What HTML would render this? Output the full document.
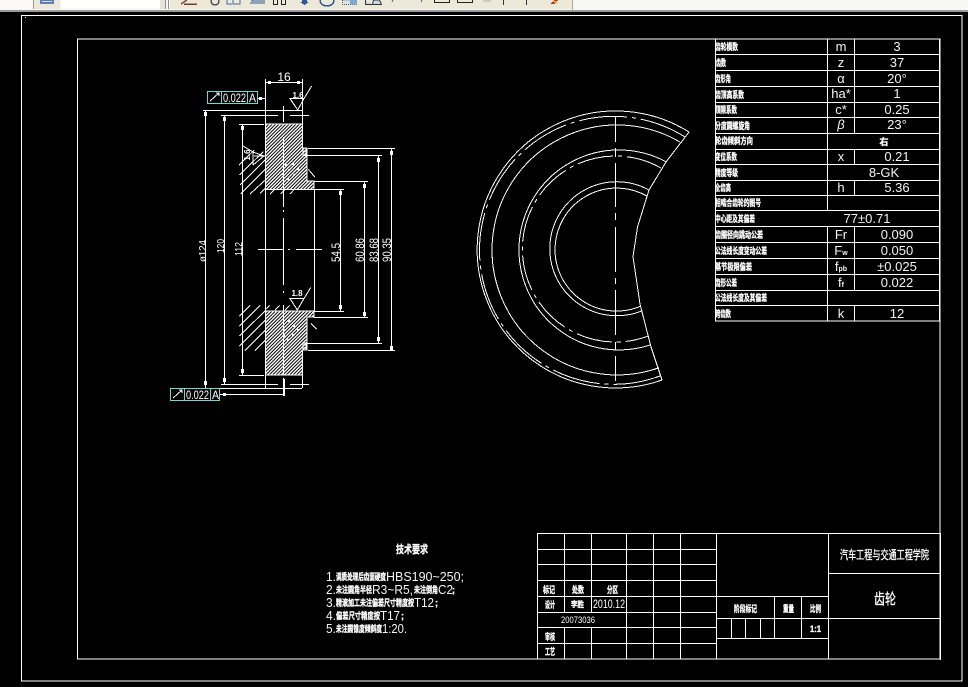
<!DOCTYPE html>
<html><head><meta charset="utf-8"><title>齿轮</title>
<style>
html,body{margin:0;padding:0;background:#000;width:968px;height:687px;overflow:hidden}
svg{display:block;position:absolute;left:0;top:0}
path,line,rect,circle,polyline{shape-rendering:crispEdges}
pattern rect{shape-rendering:auto}
.c{font-family:"Liberation Sans","WenQuanYi Zen Hei","Noto Sans CJK SC",sans-serif;font-weight:bold;font-size:9px;fill:#fff;stroke:#fff;stroke-width:.35}
.t{font-family:"Liberation Sans","Noto Sans CJK SC",sans-serif;font-size:12px;fill:#fff;stroke:#fff;stroke-width:.3}
.l{font-family:"Liberation Sans",sans-serif;font-size:13px;fill:#f4f4f4}
.d{font-family:"Liberation Sans",sans-serif;font-size:12px;fill:#fff}
.m{text-anchor:middle}
</style></head><body>
<svg width="968" height="687" viewBox="0 0 968 687" xmlns="http://www.w3.org/2000/svg">
<defs>
<pattern id="h" width="2.4" height="2.4" patternUnits="userSpaceOnUse" patternTransform="rotate(-45)">
<rect width="2.4" height="2.4" fill="#000"/><rect width="2.4" height="1.4" fill="#fff"/>
</pattern>
</defs>
<rect width="968" height="687" fill="#000"/>
<!-- toolbar -->
<rect x="0" y="0" width="968" height="10" fill="#f7f7f3"/>
<rect x="0" y="10" width="968" height="2" fill="#9a9a9a"/>
<rect x="0" y="0" width="31" height="9" fill="#fbfaf6"/>
<rect x="33" y="0" width="1" height="9" fill="#9b9b90"/>
<rect x="34" y="0" width="26" height="9" fill="#ece9d8"/>
<rect x="40" y="0" width="14" height="4" fill="#5f7fb8"/>
<rect x="42" y="1" width="10" height="1" fill="#cfd8ea"/>
<rect x="61" y="0" width="99" height="8" fill="#fff"/>
<rect x="160" y="0" width="5" height="9" fill="#e6e4d8"/>
<rect x="165" y="0" width="1" height="9" fill="#8f8f88"/>
<rect x="168" y="0" width="1" height="9" fill="#8f8f88"/>
<rect x="170" y="0" width="402" height="9" fill="#ece9d8"/>
<rect x="572" y="0" width="1" height="10" fill="#a8a8a0"/>
<path d="M181 4l6-4M184 4h13" stroke="#7a3a2a" stroke-width="1.5" fill="none"/>
<circle cx="215" cy="1" r="4" fill="none" stroke="#555" stroke-width="1.5"/>
<path d="M227 0v4h5M233 0v4h7V0" stroke="#3a6ea8" stroke-width="1" fill="none"/>
<path d="M250 3h15M252 0v1h13" stroke="#2a5a98" stroke-width="1.2" fill="none"/>
<path d="M273.500 0v4.500h4V0M281.500 0v4.500h4V0" stroke="#222" fill="none"/>
<path d="M302 0h5v2h2l-4.500 3l-4.500-3h2z" fill="#2a5a98"/>
<path d="M320 0a7 6 0 0 0 14 0" stroke="#2a5a98" stroke-width="1.500" fill="none"/>
<rect x="342.500" y="0" width="14" height="4.500" fill="#d8e4f0" stroke="#555" stroke-dasharray="1 1"/>
<path d="M350 0h7v4.500h-7z" fill="#7fa8d0"/>
<path d="M365.500 0v4.500h16l-2-4.500h-6l-1 4.500" stroke="#333" fill="#c8d8e8"/>
<path d="M392 2l1-2M421 2l1-2" stroke="#2a5a98" fill="none"/>
<path d="M434.500 0v2.500h15V0M457.500 0v2.500h15V0" stroke="#222" fill="none"/>
<path d="M483 1h8" stroke="#aaa"/>
<path d="M503.500 0v5M526.500 0v5" stroke="#333"/>
<path d="M550 4l5-4h3l-3 4z" fill="#c03020"/><path d="M554 1h3v2h-3z" fill="#d8b030"/>

<!-- frames -->
<g fill="none" stroke="#fff">
<rect x="21.500" y="15.500" width="940.500" height="665.500"/>
<rect x="77.500" y="39" width="862.500" height="620"/>
</g>
<rect x="25" y="17" width="1" height="1" fill="#fff"/>

<!-- section view hatch -->
<path d="M265.500 124H302.500V148H307V181H314V189.500H265.500Z" fill="url(#h)" style="shape-rendering:auto"/>
<path d="M265.500 311H314V317H307V350H302.500V375H265.500Z" fill="url(#h)" style="shape-rendering:auto"/>
<g fill="#fff">
<circle cx="286" cy="165" r="1"/><circle cx="289" cy="170" r="1"/><circle cx="293" cy="164" r="1"/><circle cx="298" cy="169" r="1"/><circle cx="294" cy="175" r="1"/><circle cx="288" cy="179" r="1"/><circle cx="283" cy="174" r="1"/>
<circle cx="289" cy="321" r="1"/><circle cx="294" cy="326" r="1"/><circle cx="298" cy="330" r="1"/><circle cx="293" cy="335" r="1"/><circle cx="288" cy="340" r="1"/><circle cx="284" cy="336" r="1"/><circle cx="285" cy="330" r="1"/>
</g>
<g stroke="#fff" stroke-width="1" fill="none">
<path d="M265.500 124H302.500V148H307V181H314V189.500H265.500Z"/>
<path d="M265.500 311H314V317H307V350H302.500V375H265.500Z"/>
<path d="M303 148h3v7.500h-3zM303 343h3v7h-3z"/>
<!-- extension lines top -->
<line x1="265.500" y1="79" x2="265.500" y2="388"/>
<line x1="302.500" y1="79" x2="302.500" y2="124"/>
<line x1="302.500" y1="375" x2="302.500" y2="388"/>
<line x1="314.500" y1="189" x2="314.500" y2="311"/>
<line x1="266" y1="82.500" x2="302" y2="82.500"/>
<line x1="203" y1="110.500" x2="302" y2="110.500"/>
<line x1="221" y1="115.500" x2="278" y2="115.500"/>
<line x1="290" y1="115.500" x2="309" y2="115.500"/>
<line x1="239" y1="124.500" x2="264" y2="124.500"/>
<line x1="308" y1="148.500" x2="395" y2="148.500"/>
<line x1="306" y1="155.500" x2="382" y2="155.500"/>
<line x1="314" y1="181.500" x2="368" y2="181.500"/>
<line x1="314" y1="189.500" x2="344" y2="189.500"/>
<line x1="314" y1="311.500" x2="344" y2="311.500"/>
<line x1="314" y1="317.500" x2="368" y2="317.500"/>
<line x1="306" y1="343.500" x2="382" y2="343.500"/>
<line x1="308" y1="350.500" x2="395" y2="350.500"/>
<line x1="239" y1="375.500" x2="264" y2="375.500"/>
<line x1="221" y1="384.500" x2="278" y2="384.500"/>
<line x1="290" y1="384.500" x2="309" y2="384.500"/>
<line x1="203" y1="388.500" x2="302" y2="388.500"/>
<!-- dims -->
<line x1="205.500" y1="111" x2="205.500" y2="388"/>
<line x1="224.500" y1="116" x2="224.500" y2="384"/>
<line x1="242.500" y1="125" x2="242.500" y2="375"/>
<line x1="340.500" y1="190" x2="340.500" y2="311"/>
<line x1="364.500" y1="182" x2="364.500" y2="317"/>
<line x1="378.500" y1="156" x2="378.500" y2="343"/>
<line x1="391.500" y1="149" x2="391.500" y2="350"/>
<!-- centre lines -->
<path d="M283.500 106V122M283.500 137V207M283.500 210V212M283.500 218V265M283.500 258V285M283.500 291V293M283.500 305V375M283.500 378V396"/>
<path d="M258 249.500H283M288 249.500H290M296 249.500H322"/>
<!-- leader -->
<line x1="258" y1="98.500" x2="265" y2="98.500"/>
<line x1="220" y1="394.500" x2="283" y2="394.500"/>
<line x1="284.500" y1="379" x2="284.500" y2="396"/>
<!-- ghost hatch -->
<path d="M239 165L254.300 150M239.300 175L263.300 151.700M240 185L265 160M240.700 194L265.300 169.300M250 194L265.300 180M260 193.300L265.300 188.300M270 194L275 189.300M280.700 194L285 189.300M290 194L294.300 189.300M239.300 316L250 305.300M239.300 326L260 305.300M239.300 336L265.300 310.700M239.300 346L265.300 320M245 350.700L265.300 330M255 350.700L265.300 340M265.300 309.300L270 305.300M275 310L280 305.300M285 310L290 305.300M308.300 169.300L315 177.300M311 323.300L316.700 329.300"/>
<!-- roughness -->
<path d="M290 98.500H304L297.700 110ZM304 98.500L311.700 86"/>
<path d="M290 298.500H304L297.300 310ZM304 298.500L310.700 287.500"/>
<path d="M243 146L253 152L253 165M253 152L264 156L253 165M254 156H265"/>
</g>
<g fill="#fff">
<rect x="268" y="81" width="3" height="3"/><rect x="297" y="81" width="3" height="3"/>
<rect x="259" y="97" width="3" height="3"/><rect x="223" y="393" width="3" height="3"/>
<rect x="204" y="112" width="3" height="4"/><rect x="223" y="117" width="3" height="4"/><rect x="241" y="126" width="3" height="4"/><rect x="339" y="191" width="3" height="4"/><rect x="363" y="184" width="3" height="4"/><rect x="377" y="158" width="3" height="4"/><rect x="390" y="151" width="3" height="4"/>
<rect x="204" y="381" width="3" height="4"/><rect x="223" y="378" width="3" height="4"/><rect x="241" y="369" width="3" height="4"/><rect x="339" y="305" width="3" height="4"/><rect x="363" y="312" width="3" height="4"/><rect x="377" y="337" width="3" height="4"/><rect x="390" y="346" width="3" height="4"/>
</g>
<!-- FCF -->
<g fill="none" stroke="#78d4d0">
<path d="M207.500 91.500H257.500V103.500H207.500ZM221.500 91.500V103.500M247.500 91.500V103.500"/>
<path d="M170.500 388.500H219.500V400.500H170.500ZM184.500 388.500V400.500M210.500 388.500V400.500"/>
</g>
<path d="M210 101L219 93M216 93H219V96M173 398L182 390M179 390H182V393" stroke="#fff" fill="none"/>
<text class="d" x="223" y="102" textLength="23" lengthAdjust="spacingAndGlyphs">0.022</text>
<text class="d" x="249" y="102" textLength="7" lengthAdjust="spacingAndGlyphs">A</text>
<text class="d" x="186" y="399" textLength="23" lengthAdjust="spacingAndGlyphs">0.022</text>
<text class="d" x="212" y="399" textLength="7" lengthAdjust="spacingAndGlyphs">A</text>
<text class="d m" x="284" y="81">16</text>
<text class="d m" x="298" y="98" style="font-size:8px;font-weight:bold">1.6</text>
<text class="d m" x="297" y="296" style="font-size:8px;font-weight:bold">1.8</text>
<text class="d m" transform="rotate(-90 250 155)" x="250" y="155" style="font-size:8px;font-weight:bold">1.6</text>
<text class="d" transform="rotate(-90 206 262)" x="206" y="262" style="font-size:10px" textLength="22" lengthAdjust="spacingAndGlyphs">ø124</text>
<text class="d" transform="rotate(-90 224 253)" x="224" y="253" style="font-size:10px" textLength="14" lengthAdjust="spacingAndGlyphs">120</text>
<text class="d" transform="rotate(-90 242 256)" x="242" y="256" style="font-size:10px" textLength="14" lengthAdjust="spacingAndGlyphs">112</text>
<text class="d" transform="rotate(-90 340 262)" x="340" y="262" textLength="19" lengthAdjust="spacingAndGlyphs">54.5</text>
<text class="d" transform="rotate(-90 364 262)" x="364" y="262" textLength="24" lengthAdjust="spacingAndGlyphs">60.86</text>
<text class="d" transform="rotate(-90 378 262)" x="378" y="262" textLength="24" lengthAdjust="spacingAndGlyphs">83.68</text>
<text class="d" transform="rotate(-90 391 262)" x="391" y="262" textLength="24" lengthAdjust="spacingAndGlyphs">90.35</text>

<!-- front view -->
<g fill="none" stroke="#fff" stroke-width="1">
<path d="M689 132A138.500 138.500 0 1 0 662 380"/>
<path d="M685 137A134 134 0 1 0 660 376" stroke-dasharray="48 5 4 5"/>
<path d="M680 142A125 125 0 1 0 659 367.700"/>
<path d="M666 161.700A100 100 0 1 0 650 345"/>
<path d="M661 168A93 93 0 1 0 648.300 336" stroke-dasharray="36 5 4 5"/>
<path d="M649 190A67 67 0 1 0 642.300 310.700"/>
<path d="M646.700 196A61.500 61.500 0 1 0 641 306"/>
<path d="M689 132L666 162L649 190L637.500 227L633 256.700L640 304L651 347L662 380"/>
<path d="M615.500 117V142M615.500 148V157M615.500 163V207M615.500 213V220M615.500 227V272M615.500 278V284M615.500 290V335M615.500 342V350M615.500 356V381"/>
</g>

<!-- parameter table -->
<g stroke="#fff" fill="none">
<rect x="715.500" y="39" width="224" height="282"/>
<path d="M715 54.500H940M715 70.500H940M715 86.500H940M715 102.500H940M715 117.500H940M715 133.500H940M715 149.500H940M715 164.500H940M715 180.500H940M715 195.500H940M715 210.500H940M715 226.500H940M715 242.500H940M715 258.500H940M715 274.500H940M715 290.500H940M715 305.500H940"/>
<path d="M827.500 39V210.500M827.500 226.500V321M854.500 39V133M854.500 149V164.500M854.500 180V195M854.500 226.500V290M854.500 305.500V321"/>
</g>
<g>
<text class="c" x="715" y="50" textLength="23" lengthAdjust="spacingAndGlyphs">齿轮模数</text>
<text class="c" x="716" y="66" textLength="10" lengthAdjust="spacingAndGlyphs">齿数</text>
<text class="c" x="715" y="82" textLength="16" lengthAdjust="spacingAndGlyphs">齿形角</text>
<text class="c" x="715" y="98" textLength="29" lengthAdjust="spacingAndGlyphs">齿顶高系数</text>
<text class="c" x="715" y="113" textLength="22" lengthAdjust="spacingAndGlyphs">顶隙系数</text>
<text class="c" x="715" y="129" textLength="35" lengthAdjust="spacingAndGlyphs">分度圆螺旋角</text>
<text class="c" x="715" y="144" textLength="38" lengthAdjust="spacingAndGlyphs">轮齿倾斜方向</text>
<text class="c" x="715" y="160" textLength="22" lengthAdjust="spacingAndGlyphs">变位系数</text>
<text class="c" x="715" y="176" textLength="23" lengthAdjust="spacingAndGlyphs">精度等级</text>
<text class="c" x="715" y="191" textLength="16" lengthAdjust="spacingAndGlyphs">全齿高</text>
<text class="c" x="715" y="206" textLength="46" lengthAdjust="spacingAndGlyphs">相啮合齿轮的图号</text>
<text class="c" x="715" y="222" textLength="40" lengthAdjust="spacingAndGlyphs">中心距及其偏差</text>
<text class="c" x="715" y="238" textLength="48" lengthAdjust="spacingAndGlyphs">齿圈径向跳动公差</text>
<text class="c" x="715" y="254" textLength="52" lengthAdjust="spacingAndGlyphs">公法线长度变动公差</text>
<text class="c" x="715" y="270" textLength="37" lengthAdjust="spacingAndGlyphs">基节极限偏差</text>
<text class="c" x="715" y="286" textLength="22" lengthAdjust="spacingAndGlyphs">齿形公差</text>
<text class="c" x="715" y="301" textLength="52" lengthAdjust="spacingAndGlyphs">公法线长度及其偏差</text>
<text class="c" x="715" y="317" textLength="16" lengthAdjust="spacingAndGlyphs">跨齿数</text>
</g>
<g>
<text class="l m" x="841" y="51">m</text><text class="l m" x="897" y="51">3</text>
<text class="l m" x="841" y="67">z</text><text class="l m" x="897" y="67">37</text>
<text class="l m" x="841" y="83">α</text><text class="l m" x="897" y="83">20°</text>
<text class="l m" x="841" y="98">ha*</text><text class="l m" x="897" y="98">1</text>
<text class="l m" x="841" y="114">c*</text><text class="l m" x="897" y="114">0.25</text>
<text class="l m" x="841" y="129" font-style="italic">β</text><text class="l m" x="897" y="129">23°</text>
<text class="c m" x="884" y="145">右</text>
<text class="l m" x="841" y="161">x</text><text class="l m" x="897" y="161">0.21</text>
<text class="l m" x="884" y="177">8-GK</text>
<text class="l m" x="841" y="192">h</text><text class="l m" x="897" y="192">5.36</text>
<text class="l m" x="867" y="223">77±0.71</text>
<text class="l m" x="841" y="239">Fr</text><text class="l m" x="897" y="239">0.090</text>
<text class="l m" x="841" y="255">F<tspan style="font-size:7px;font-weight:bold">w</tspan></text><text class="l m" x="897" y="255">0.050</text>
<text class="l m" x="841" y="271">f<tspan style="font-size:7px;font-weight:bold">pb</tspan></text><text class="l m" x="897" y="271">±0.025</text>
<text class="l m" x="841" y="287">f<tspan style="font-size:7px;font-weight:bold">f</tspan></text><text class="l m" x="897" y="287">0.022</text>
<text class="l m" x="841" y="318">k</text><text class="l m" x="897" y="318">12</text>
</g>

<!-- title block -->
<g stroke="#fff" fill="none">
<rect x="537.500" y="533.500" width="402.500" height="125.500"/>
<path d="M537 549.500H716M537 564.500H716M537 580.500H716M537 596.500H828M537 612.500H716M537 627.500H716M537 643.500H716M716 618.500H940M716 638.500H828M828 573.500H940"/>
<path d="M564.500 533V612M564.500 627V659M591.500 533V612M591.500 627V659M626.500 533V659M653.500 533V659M680.500 533V659M716.500 533V659M828.500 533V659M774.500 596V638M801.500 596V638M731.500 618V638M745.500 618V638M760.500 618V638"/>
<line x1="940.500" y1="533" x2="940.500" y2="660"/>
</g>
<text class="t" x="840" y="559" style="font-size:12px" textLength="89" lengthAdjust="spacingAndGlyphs">汽车工程与交通工程学院</text>
<text class="t" x="874" y="604" style="font-size:15px" textLength="22" lengthAdjust="spacingAndGlyphs">齿轮</text>
<text class="c" x="734" y="612" textLength="23" lengthAdjust="spacingAndGlyphs">阶段标记</text>
<text class="c" x="783" y="612" textLength="11" lengthAdjust="spacingAndGlyphs">重量</text>
<text class="c" x="810" y="612" textLength="11" lengthAdjust="spacingAndGlyphs">比例</text>
<text class="c" x="810" y="632" textLength="11" lengthAdjust="spacingAndGlyphs">1:1</text>
<text class="c" x="543" y="593" textLength="12" lengthAdjust="spacingAndGlyphs">标记</text>
<text class="c" x="572" y="593" textLength="12" lengthAdjust="spacingAndGlyphs">处数</text>
<text class="c" x="607" y="593" textLength="11" lengthAdjust="spacingAndGlyphs">分区</text>
<text class="c" x="545" y="608" textLength="10" lengthAdjust="spacingAndGlyphs">设计</text>
<text class="c" x="571" y="607" style="font-size:8px" textLength="13" lengthAdjust="spacingAndGlyphs">李胜</text>
<text class="d" x="593" y="608" textLength="32" lengthAdjust="spacingAndGlyphs">2010.12</text>
<text class="d" x="561" y="623" style="font-size:9px" textLength="34" lengthAdjust="spacingAndGlyphs">20073036</text>
<text class="c" x="545" y="640" textLength="10" lengthAdjust="spacingAndGlyphs">审核</text>
<text class="c" x="545" y="655" textLength="10" lengthAdjust="spacingAndGlyphs">工艺</text>

<!-- technical requirements -->
<text class="t" x="396" y="553" style="font-size:11px;font-weight:bold" textLength="32" lengthAdjust="spacingAndGlyphs">技术要求</text>
<text class="l" x="326" y="581" textLength="10" lengthAdjust="spacingAndGlyphs">1.</text>
<text class="c" x="336" y="580" textLength="50" lengthAdjust="spacingAndGlyphs">调质处理后齿面硬度</text>
<text class="l" x="386" y="581" textLength="78" lengthAdjust="spacingAndGlyphs">HBS190~250;</text>
<text class="l" x="326" y="594" textLength="10" lengthAdjust="spacingAndGlyphs">2.</text>
<text class="c" x="336" y="593" textLength="36" lengthAdjust="spacingAndGlyphs">未注圆角半径</text>
<text class="l" x="372" y="594" textLength="41" lengthAdjust="spacingAndGlyphs">R3~R5,</text>
<text class="c" x="414" y="593" textLength="24" lengthAdjust="spacingAndGlyphs">未注倒角</text>
<text class="l" x="438" y="594" textLength="15" lengthAdjust="spacingAndGlyphs">C2</text>
<text class="c" x="452" y="593">;</text>
<text class="l" x="326" y="607" textLength="10" lengthAdjust="spacingAndGlyphs">3.</text>
<text class="c" x="336" y="606" textLength="78" lengthAdjust="spacingAndGlyphs">精滚加工未注偏差尺寸精度按</text>
<text class="l" x="414" y="607" textLength="20" lengthAdjust="spacingAndGlyphs">T12</text>
<text class="c" x="435" y="606">;</text>
<text class="l" x="326" y="620" textLength="10" lengthAdjust="spacingAndGlyphs">4.</text>
<text class="c" x="336" y="619" textLength="44" lengthAdjust="spacingAndGlyphs">偏差尺寸精度按</text>
<text class="l" x="380" y="620" textLength="20" lengthAdjust="spacingAndGlyphs">T17</text>
<text class="c" x="401" y="619">;</text>
<text class="l" x="326" y="633" textLength="10" lengthAdjust="spacingAndGlyphs">5.</text>
<text class="c" x="336" y="632" textLength="46" lengthAdjust="spacingAndGlyphs">未注圆锥度倾斜度</text>
<text class="l" x="382" y="633" textLength="25" lengthAdjust="spacingAndGlyphs">1:20.</text>
</svg>
</body></html>
